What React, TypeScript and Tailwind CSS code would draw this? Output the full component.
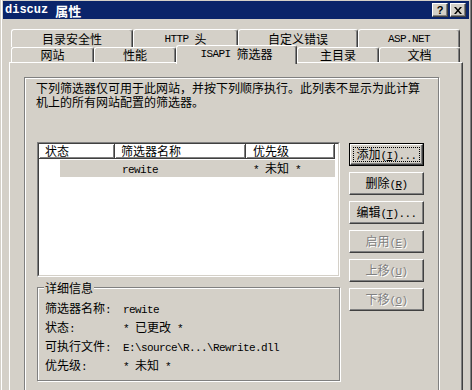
import React from 'react';

const cjk = "font-['Noto_Sans_CJK_SC',sans-serif]";

// splits a string into ascii / cjk runs so latin parts get the narrow mono face
function T({ s }: { s: string }) {
  const parts = s.split(/([\x00-\x7f]+)/).filter(Boolean);
  return (
    <>
      {parts.map((p, i) =>
        /^[\x00-\x7f]+$/.test(p) ? (
          <span key={i} className="font-['Liberation_Mono',monospace] text-[11px] tracking-[-0.6px] whitespace-pre">
            {p}
          </span>
        ) : (
          <span key={i}>{p}</span>
        )
      )}
    </>
  );
}

function Tab({ w, label, active }: { w: string; label: string; active?: boolean }) {
  return (
    <div
      className={`${w} ${
        active ? 'relative z-10 h-[19px] -mb-[2px] pb-[3px]' : 'h-full'
      } flex items-center justify-center rounded-t-[3px] border-t border-l border-r border-t-white border-l-white border-r-[#404040] bg-[#d4d0c8] shadow-[inset_-1px_0_#808080] text-[12px] leading-[12px] text-black`}
    >
      <T s={label} />
    </div>
  );
}

function Btn({
  label,
  mnemonic,
  tail = '',
  disabled,
  focused,
}: {
  label: string;
  mnemonic: string;
  tail?: string;
  disabled?: boolean;
  focused?: boolean;
}) {
  const text = (
    <span
      className={`text-[12px] leading-[12px] ${
        disabled ? 'text-[#808080] [text-shadow:1px_1px_0_#fff]' : 'text-black'
      }`}
    >
      {label}
      <span className="font-['Liberation_Mono',monospace] text-[11px] tracking-[-0.6px] whitespace-pre">
        (<u>{mnemonic}</u>){tail}
      </span>
    </span>
  );
  if (focused) {
    return (
      <div className="h-[23px] w-[75px] border border-black">
        <div className="flex h-full w-full items-center justify-center border border-t-white border-l-white border-r-[#404040] border-b-[#404040] p-[2px] shadow-[inset_-1px_-1px_#808080]">
          <div className="flex h-full w-full items-center justify-center border border-dotted border-black">
            {text}
          </div>
        </div>
      </div>
    );
  }
  return (
    <div className="flex h-[23px] w-[75px] items-center justify-center border border-t-white border-l-white border-r-[#404040] border-b-[#404040] shadow-[inset_-1px_-1px_#808080]">
      {text}
    </div>
  );
}

function HeaderCell({ w, label, pad }: { w: string; label: string; pad: string }) {
  return (
    <div
      className={`${w} ${pad} flex h-full items-center border-r border-b border-r-[#404040] border-b-[#404040] shadow-[inset_1px_1px_white,inset_-1px_-1px_#808080] text-[12px] leading-[12px]`}
    >
      {label}
    </div>
  );
}

const details: [string, string][] = [
  ['筛选器名称:', 'rewite'],
  ['状态:', '* 已更改 *'],
  ['可执行文件:', 'E:\\source\\R...\\Rewrite.dll'],
  ['优先级:', '* 未知 *'],
];

export default function App() {
  return (
    <div
      className={`${cjk} flex h-[390px] w-[472px] flex-col overflow-hidden bg-[#d4d0c8] text-black shadow-[inset_1px_0_#d4d0c8,inset_2px_0_white,inset_-1px_0_#404040,inset_-2px_0_#808080]`}
    >
      {/* title bar */}
      <div className="mx-[3px] mt-[1px] flex h-[18px] shrink-0 items-center justify-between bg-[#0a246a] pl-[2px] pr-[3px]">
        <div className="flex items-center gap-[7px] text-white">
          <span className="font-['Liberation_Mono',monospace] text-[12px] font-bold">discuz</span>
          <span className="text-[13px] leading-[13px] font-bold">属性</span>
        </div>
        <div className="flex gap-[2px]">
          <div className="flex h-[14px] w-[16px] items-center justify-center border border-t-white border-l-white border-r-[#404040] border-b-[#404040] bg-[#d4d0c8] shadow-[inset_-1px_-1px_#808080]">
            <span className="font-['Liberation_Sans',sans-serif] text-[11px] leading-[11px] font-bold">?</span>
          </div>
          <div className="flex h-[14px] w-[16px] items-center justify-center border border-t-white border-l-white border-r-[#404040] border-b-[#404040] bg-[#d4d0c8] shadow-[inset_-1px_-1px_#808080]">
            <svg width="8" height="7" viewBox="0 0 8 7">
              <path d="M0 0h2l2 2.5L6 0h2L5 3.5 8 7H6L4 4.5 2 7H0l3-3.5z" fill="#000" />
            </svg>
          </div>
        </div>
      </div>

      {/* tabs */}
      <div className="mt-[10px] ml-[11px] flex h-[18px] shrink-0">
        <Tab w="w-[122px]" label="目录安全性" />
        <Tab w="w-[105px]" label="HTTP 头" />
        <Tab w="w-[120px]" label="自定义错误" />
        <Tab w="w-[102px]" label="ASP.NET" />
      </div>
      <div className="ml-[11px] flex h-[15px] shrink-0 items-end">
        <Tab w="w-[83px]" label="网站" />
        <Tab w="w-[82px]" label="性能" />
        <Tab w="w-[121px]" label="ISAPI 筛选器" active />
        <Tab w="w-[82px]" label="主目录" />
        <Tab w="w-[81px]" label="文档" />
      </div>

      {/* tab page */}
      <div className="mx-[9px] h-[360px] shrink-0 border-t border-l border-r border-t-white border-l-white border-r-[#404040] pt-[14px] pl-[14px] pr-[23px] shadow-[inset_-1px_0_#808080]">
        <div className="h-[340px] border border-[#808080] pt-[3px] pl-[11px] shadow-[inset_1px_1px_white,1px_1px_white]">
          <p className="text-[12px] leading-[14px]">
            下列筛选器仅可用于此网站，并按下列顺序执行。此列表不显示为此计算
            <br />
            机上的所有网站配置的筛选器。
          </p>

          <div className="mt-[33px] flex pl-[1px]">
            <div>
              {/* list view */}
              <div className="h-[135px] w-[303px] border border-t-[#808080] border-l-[#808080] border-r-white border-b-white">
                <div className="h-full w-full border border-t-[#404040] border-l-[#404040] border-r-[#d4d0c8] border-b-[#d4d0c8] bg-white">
                  <div className="flex h-[15px] bg-white">
                    <HeaderCell w="w-[76px]" label="状态" pad="pl-[6px]" />
                    <HeaderCell w="w-[131px]" label="筛选器名称" pad="pl-[6px]" />
                    <HeaderCell w="w-[89px]" label="优先级" pad="pl-[7px]" />
                  </div>
                  <div className="mt-[1px] flex h-[17px] items-center">
                    <div className="ml-[21px] flex h-full w-[275px] items-center bg-[#d4d0c8] text-[12px] leading-[12px]">
                      <div className="w-[55px]" />
                      <div className="w-[131px] pl-[7px]">
                        <T s="rewite" />
                      </div>
                      <div className="pl-[7px]">
                        <T s="* 未知 *" />
                      </div>
                    </div>
                  </div>
                </div>
              </div>

              {/* details group */}
              <div className="relative mt-[10px] h-[94px] w-[303px] border border-[#808080] pt-[11px] pl-[7px] shadow-[inset_1px_1px_white,1px_1px_white]">
                <span className="absolute -top-[7px] left-[6px] bg-[#d4d0c8] px-[1px] text-[12px] leading-[13px]">
                  详细信息
                </span>
                {details.map(([k, v]) => (
                  <div key={k} className="flex h-[19px] items-center text-[12px] leading-[12px]">
                    <div className="w-[78px]">
                      <T s={k} />
                    </div>
                    <div>
                      <T s={v} />
                    </div>
                  </div>
                ))}
              </div>
            </div>

            {/* buttons */}
            <div className="mt-[1px] ml-[9px] flex flex-col gap-[6px]">
              <Btn label="添加" mnemonic="I" tail="..." focused />
              <Btn label="删除" mnemonic="R" />
              <Btn label="编辑" mnemonic="T" tail="..." />
              <Btn label="启用" mnemonic="E" disabled />
              <Btn label="上移" mnemonic="U" disabled />
              <Btn label="下移" mnemonic="O" disabled />
            </div>
          </div>
        </div>
      </div>
    </div>
  );
}
